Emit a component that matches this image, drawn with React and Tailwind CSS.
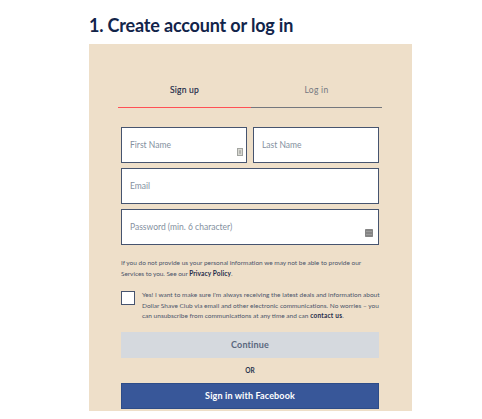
const fieldClass =
  'block w-full border border-[#46546f] bg-white px-[8px] text-[8.5px] text-[#59677d] placeholder:text-[#8490a0] placeholder:opacity-100 outline-none';

function Field({ label, type = 'text', size = 'h-[36px]', children }) {
  return (
    <div className="relative">
      <input type={type} placeholder={label} aria-label={label} className={`${fieldClass} ${size}`} />
      {children}
    </div>
  );
}

function Tabs() {
  return (
    <div className="flex text-center text-[8.5px] leading-[12px]">
      <button type="button" className="h-[24px] w-[133px] border-b border-b-[#ff5055] pb-[11px] text-[#1d2b49]">
        <span className="tracking-[0.2px] [-webkit-text-stroke:0.15px]">Sign up</span>
      </button>
      <button type="button" className="h-[24px] w-[131px] border-b border-b-[#74777d] pb-[11px] tracking-[0.3px] text-[#747881]">
        Log in
      </button>
    </div>
  );
}

export default function App() {
  return (
    <main className="h-[419px] w-[482px] overflow-hidden bg-white pl-[89px] pt-[14px] font-[Lato,'Open_Sans',sans-serif] text-[#12244a]">
      <h1 className="h-[30px] whitespace-nowrap text-[18px] font-bold leading-[22px] tracking-[-0.17px]">
        1. Create account or log in
      </h1>

      <section className="h-[367px] w-[323px] bg-[#eedfc9] pl-[29px] pt-[40px]">
        <Tabs />

        <form className="ml-[3px] mt-[18px] w-[258px] pt-px">
          {/* Fields */}
          <div className="grid gap-[5px]">
            <div className="grid grid-cols-2 gap-[6px]">
              <Field label="First Name">
                <svg className="absolute bottom-[7px] right-[4px]" width="6" height="8" viewBox="0 0 6 8">
                  <rect x="0.5" y="0.5" width="5" height="7" fill="#d8d8d2" stroke="#a3a5a1" />
                  <path d="M3 2.2v3.6" fill="none" stroke="#8b8d8a" />
                </svg>
              </Field>
              <Field label="Last Name" />
            </div>
            <Field label="Email" />
            <Field label="Password (min. 6 character)" type="password">
              <svg className="absolute bottom-[8px] right-[6px]" width="8" height="8" viewBox="0 0 8 8">
                <rect width="8" height="8" rx="0.7" fill="#858585" />
                <path d="M1 2.5h6M1 5.5h6" stroke="#a5a5a5" strokeWidth="0.7" />
              </svg>
            </Field>
          </div>

          <p className="mt-[13px] whitespace-nowrap text-[6.5px] leading-[10.5px] text-[#4b556a]">
            <span className="block tracking-[-0.015px]">
              If you do not provide us your personal information we may not be able to provide our
            </span>
            <span className="block tracking-[-0.06px]">
              Services to you. See our <a className="font-bold tracking-[0.12px] text-[#1d2b49]">Privacy Policy</a>.
            </span>
          </p>

          {/* Marketing opt-in */}
          <label className="mt-[11px] flex gap-[7px]">
            <input type="checkbox" className="mt-px size-[14px] shrink-0 appearance-none border border-[#46546f] bg-white" />
            <span className="whitespace-nowrap text-[6.5px] leading-[10.5px] text-[#4b556a]">
              <span className="block tracking-[0.01px]">
                Yes! I want to make sure I'm always receiving the latest deals and information about
              </span>
              <span className="block tracking-[0.01px]">
                Dollar Shave Club via email and other electronic communications. No worries – you
              </span>
              <span className="block">
                can unsubscribe from communications at any time and can{' '}
                <a className="font-bold tracking-[0.24px] text-[#1d2b49]">contact us</a>.
              </span>
            </span>
          </label>

          {/* Actions */}
          <button type="button" className="mt-[10px] block h-[26px] w-full bg-[#d5d9de] text-[9px] font-bold tracking-[0.15px] text-[#59677d]">
            Continue
          </button>
          <p className="h-[25px] text-center text-[6.5px] font-bold leading-[25px] text-[#26334d]">OR</p>
          <button type="button" className="block h-[26px] w-full border border-[#2d4c88] bg-[#385799] text-[9px] font-bold tracking-[0.13px] text-white">
            Sign in with Facebook
          </button>
        </form>
      </section>
    </main>
  );
}
